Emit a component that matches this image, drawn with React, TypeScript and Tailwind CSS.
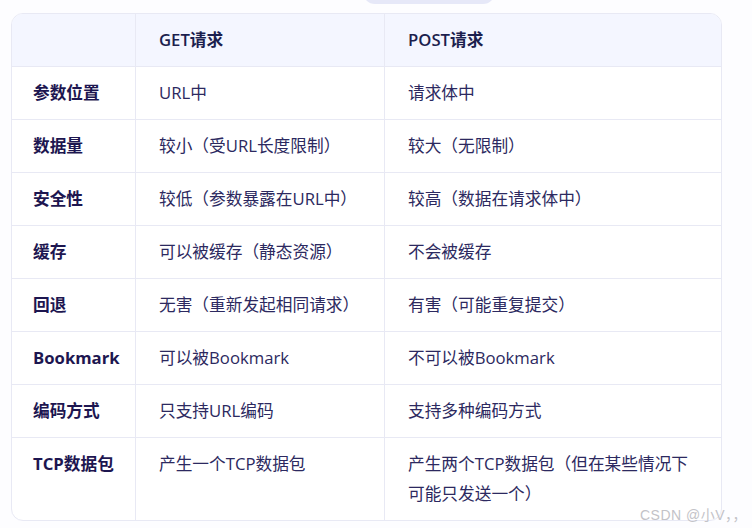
import React from "react";

const rows: [string, string, string][] = [
  ["参数位置", "URL中", "请求体中"],
  ["数据量", "较小（受URL长度限制）", "较大（无限制）"],
  ["安全性", "较低（参数暴露在URL中）", "较高（数据在请求体中）"],
  ["缓存", "可以被缓存（静态资源）", "不会被缓存"],
  ["回退", "无害（重新发起相同请求）", "有害（可能重复提交）"],
  ["Bookmark", "可以被Bookmark", "不可以被Bookmark"],
  ["编码方式", "只支持URL编码", "支持多种编码方式"],
  ["TCP数据包", "产生一个TCP数据包", "产生两个TCP数据包（但在某些情况下可能只发送一个）"],
];

export default function App() {
  return (
    <div
      className="relative w-[752px] h-[528px] bg-[#fdfdff] overflow-hidden"
      style={{ fontFamily: '"Open Sans", "Noto Sans CJK SC", sans-serif' }}
    >
      <div className="absolute left-[363px] top-[-20px] w-[132px] h-[24px] rounded-b-[12px] bg-[#e6e8f8]" />
      <div className="pt-[13px] pl-[11px]">
        <div className="w-[711px] rounded-[12px] border border-[#e8e9f4] overflow-hidden bg-white text-[16.7px] leading-[30px] text-[#2c2960]">
          <div className="grid grid-cols-[124px_249px_1fr] bg-[#f4f6ff] h-[52px]">
            <div className="border-r border-[#e8e9f4]" />
            <div className="border-r border-[#e8e9f4] px-[23px] py-[11px] font-semibold text-[#1c1f4e]">GET请求</div>
            <div className="px-[23px] py-[11px] font-semibold text-[#1c1f4e]">POST请求</div>
          </div>
          {rows.map(([a, b, c], i) => (
            <div key={i} className="grid grid-cols-[124px_249px_1fr] border-t border-[#e8e9f4]">
              <div className="border-r border-[#e8e9f4] pl-[21px] pr-2 py-[11px] font-bold text-[#1d1650]">{a}</div>
              <div className="border-r border-[#e8e9f4] px-[23px] py-[11px]">{b}</div>
              <div className="pl-[23px] pr-[24px] py-[11px]">{c}</div>
            </div>
          ))}
        </div>
      </div>
      <div
        className="absolute left-[640px] top-[506px] text-[14px] leading-[18px] tracking-[0.5px] text-[#c3c3c8]"
        style={{ fontFamily: '"Liberation Sans", "Noto Sans CJK SC", sans-serif' }}
      >
        CSDN @小V，，
      </div>
    </div>
  );
}
